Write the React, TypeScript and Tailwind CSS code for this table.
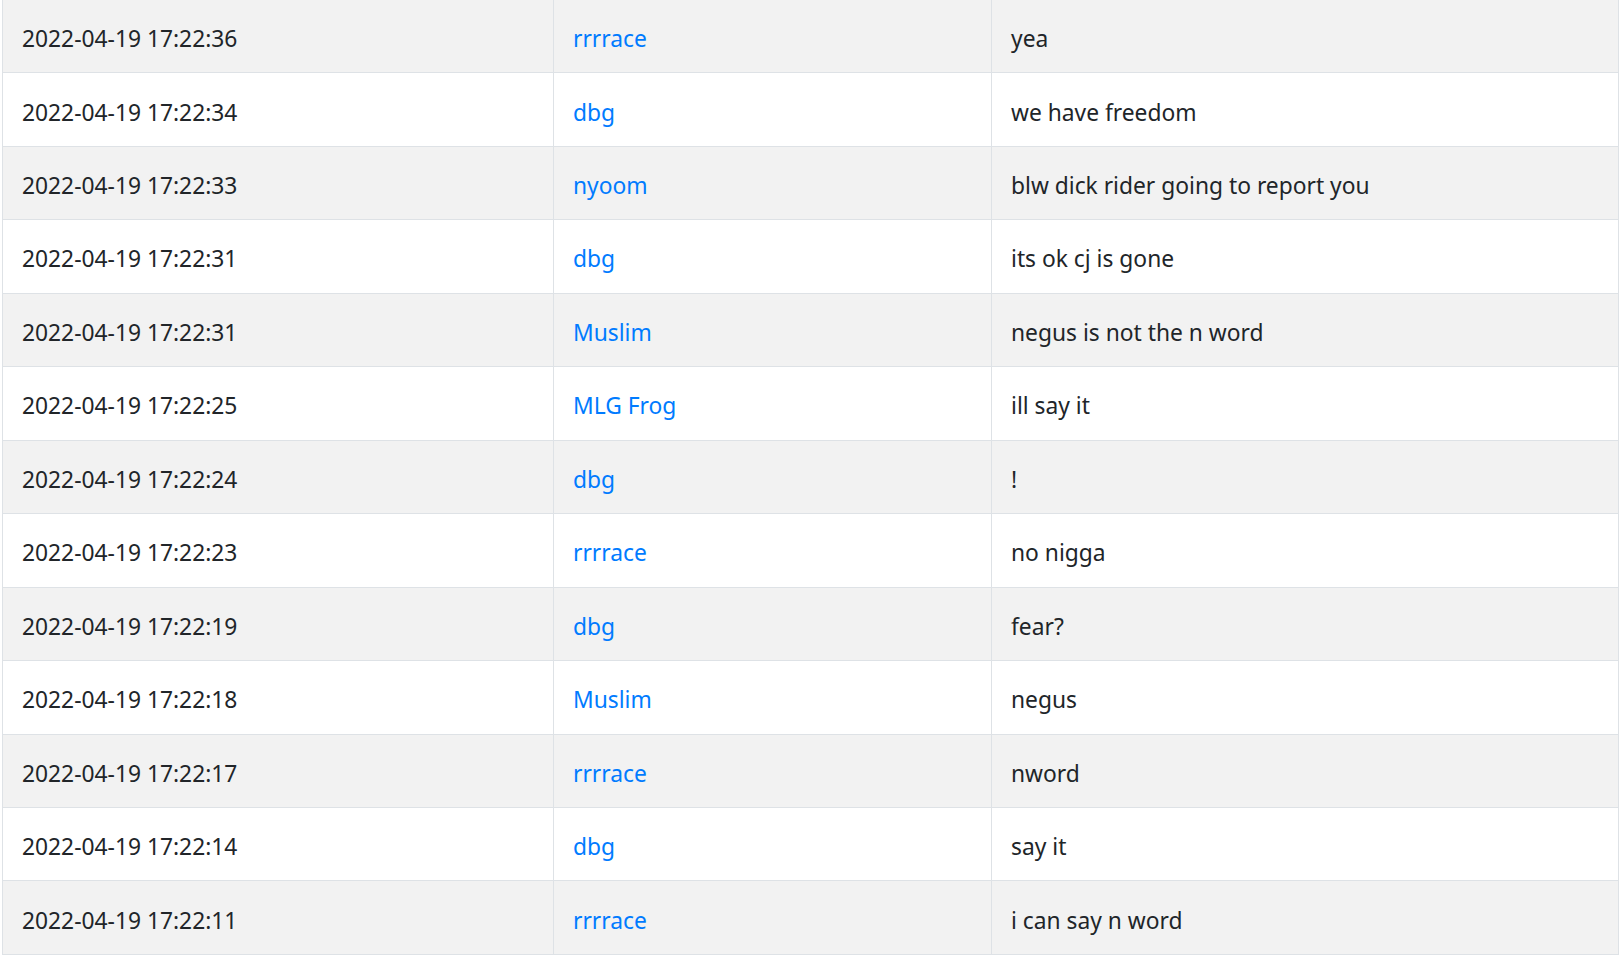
import React from "react";

const rows: [string, string, string][] = [
  ["2022-04-19 17:22:36", "rrrrace", "yea"],
  ["2022-04-19 17:22:34", "dbg", "we have freedom"],
  ["2022-04-19 17:22:33", "nyoom", "blw dick rider going to report you"],
  ["2022-04-19 17:22:31", "dbg", "its ok cj is gone"],
  ["2022-04-19 17:22:31", "Muslim", "negus is not the n word"],
  ["2022-04-19 17:22:25", "MLG Frog", "ill say it"],
  ["2022-04-19 17:22:24", "dbg", "!"],
  ["2022-04-19 17:22:23", "rrrrace", "no nigga"],
  ["2022-04-19 17:22:19", "dbg", "fear?"],
  ["2022-04-19 17:22:18", "Muslim", "negus"],
  ["2022-04-19 17:22:17", "rrrrace", "nword"],
  ["2022-04-19 17:22:14", "dbg", "say it"],
  ["2022-04-19 17:22:11", "rrrrace", "i can say n word"],
];

export default function App() {
  return (
    <div
      className="w-[1621px] h-[955px] overflow-hidden bg-white pl-[2px] text-[22.8px] text-[#212529]"
      style={{ fontFamily: '"Noto Sans", "Open Sans", sans-serif' }}
    >
      <div className="w-[1617px] border-x border-[#dee2e6]">
        {rows.map(([time, user, msg], i) => (
          <div
            key={i}
            className={`flex h-[73.46px] border-b-[1.5px] border-[#dee2e6] ${
              i % 2 === 0 ? "bg-[#f2f2f2]" : "bg-white"
            }`}
          >
            <div className="w-[551px] shrink-0 flex items-center pl-[19px] pt-[6px] border-r border-[#dee2e6]">
              {time}
            </div>
            <div className="w-[438px] shrink-0 flex items-center pl-[19px] pt-[6px] border-r border-[#dee2e6]">
              <a className="text-[#007bff]">{user}</a>
            </div>
            <div className="flex-1 flex items-center pl-[19px] pt-[6px]">{msg}</div>
          </div>
        ))}
      </div>
    </div>
  );
}
